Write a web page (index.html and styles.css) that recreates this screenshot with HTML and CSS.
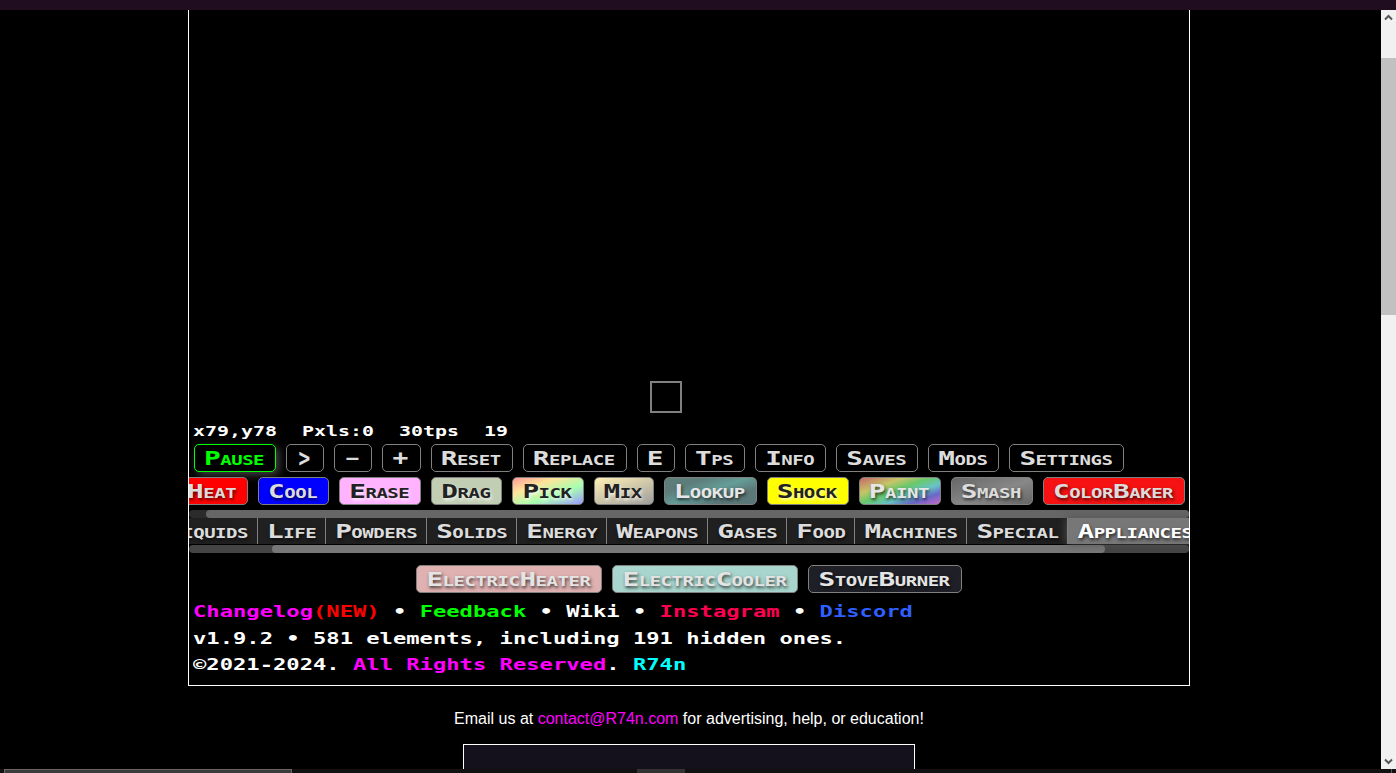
FILE: index.html
```
<!DOCTYPE html>
<html>
<head>
    <meta charset="utf-8">
    <title>Sandboxels</title>
    <link rel="stylesheet" href="styles.css">
</head>
<body>
    <div class="topStrip"></div>
    <div class="window">
        <div class="page">
            <div class="gameDiv">
                <div class="canvasArea">
                    <div class="cursorBox"></div>
                </div>
                <div class="stats">
                    <span>x79,y78</span><span>Pxls:0</span><span>30tps</span><span>19</span>
                </div>
                <div class="toolControls">
                    <button class="controlButton on"><span>Pause</span></button>
                    <button class="controlButton step"><span>&gt;</span></button>
                    <button class="controlButton minus"><span>-</span></button>
                    <button class="controlButton plus"><span>+</span></button>
                    <button class="controlButton"><span>Reset</span></button>
                    <button class="controlButton"><span>Replace</span></button>
                    <button class="controlButton"><span>E</span></button>
                    <button class="controlButton"><span>Tps</span></button>
                    <button class="controlButton"><span>Info</span></button>
                    <button class="controlButton"><span>Saves</span></button>
                    <button class="controlButton"><span>Mods</span></button>
                    <button class="controlButton"><span>Settings</span></button>
                </div>
                <div class="category tools">
                    <button class="elementButton heat"><span>Heat</span></button>
                    <button class="elementButton cool"><span>Cool</span></button>
                    <button class="elementButton bright erase"><span>Erase</span></button>
                    <button class="elementButton bright drag"><span>Drag</span></button>
                    <button class="elementButton bright pick"><span>Pick</span></button>
                    <button class="elementButton bright mix"><span>Mix</span></button>
                    <button class="elementButton lookup"><span>Lookup</span></button>
                    <button class="elementButton bright shock"><span>Shock</span></button>
                    <button class="elementButton paint"><span>Paint</span></button>
                    <button class="elementButton smash"><span>Smash</span></button>
                    <button class="elementButton colorBaker"><span>ColorBaker</span></button>
                </div>
                <div class="scrollTrack toolScroll"><div class="scrollThumb"></div></div>
                <div class="categoryControls">
                    <button class="categoryButton"><span>Liquids</span></button>
                    <button class="categoryButton"><span>Life</span></button>
                    <button class="categoryButton"><span>Powders</span></button>
                    <button class="categoryButton"><span>Solids</span></button>
                    <button class="categoryButton"><span>Energy</span></button>
                    <button class="categoryButton"><span>Weapons</span></button>
                    <button class="categoryButton"><span>Gases</span></button>
                    <button class="categoryButton"><span>Food</span></button>
                    <button class="categoryButton"><span>Machines</span></button>
                    <button class="categoryButton"><span>Special</span></button>
                    <button class="categoryButton current"><span>Appliances</span></button>
                </div>
                <div class="scrollTrack categoryScroll"><div class="scrollThumb"></div></div>
                <div class="category elements">
                    <button class="elementButton heater"><span>ElectricHeater</span></button>
                    <button class="elementButton cooler"><span>ElectricCooler</span></button>
                    <button class="elementButton burner"><span>StoveBurner</span></button>
                </div>
                <div class="info">
                    <p><a class="magenta">Changelog</a><a class="red">(NEW)</a> • <a class="green">Feedback</a> • <a>Wiki</a> • <a class="insta">Instagram</a> • <a class="discord">Discord</a></p>
                    <p>v1.9.2 • 581 elements, including 191 hidden ones.</p>
                    <p>©2021-2024. <a class="magenta">All Rights Reserved</a>. <a class="cyan">R74n</a></p>
                </div>
            </div>
            <p class="email">Email us at <a class="magenta">contact@R74n.com</a> for advertising, help, or education!</p>
            <div class="aboutBox"></div>
        </div>
        <div class="pageScroll">
            <svg width="15" height="17" viewBox="0 0 15 17"><path d="M4 9.5 L7.5 6 L11 9.5" /></svg>
            <div class="pageThumb"></div>
            <svg class="down" width="15" height="17" viewBox="0 0 15 17"><path d="M4 7.5 L7.5 11 L11 7.5" /></svg>
        </div>
    </div>
    <div class="taskbar">
        <div class="search"></div>
        <div class="activeTask"></div>
        <div class="showDesktop"></div>
    </div>
</body>
</html>
```
FILE: styles.css
```
* {
    box-sizing: border-box;
}
body {
    margin: 0;
    height: 773px;
    overflow: hidden;
    background-color: #000;
    color: #fff;
    display: flex;
    flex-direction: column;
    font-family: "Liberation Sans", Arial, sans-serif;
}
p {
    margin: 0;
}
.topStrip {
    height: 10px;
    background-color: #200d20;
}
.window {
    display: flex;
    height: 759px;
    overflow: hidden;
}
.page {
    width: 1381px;
    padding-left: 188px;
}
.gameDiv {
    width: 1002px;
    height: 676px;
    border: 1px solid #fff;
    border-top: none;
    overflow: hidden;
}
.canvasArea {
    height: 410px;
    padding: 371px 0 0 461px;
}
.cursorBox {
    width: 32px;
    height: 32px;
    border: 2px solid #808080;
}

/* wide pixel lettering: large type flattened vertically */
.stats, .info, button {
    font-family: "DejaVu Sans Mono", monospace;
    font-weight: bold;
    white-space: nowrap;
}
.stats {
    display: flex;
    gap: 25px;
    height: 24px;
    padding-left: 4px;
    font-size: 19.93px;
    line-height: 23px;
    transform: scaleY(0.68);
}
button {
    flex: none;
    padding: 0 10px;
    margin: 0;
    color: #dcdcdc;
    font-size: 27.69px;
    letter-spacing: -0.47px;
    font-variant: small-caps;
    line-height: 26px;
    text-shadow: 1px 2px 4px rgba(0, 0, 0, 0.7);
}
button span {
    display: block;
    height: 26px;
    margin: 0 1px 0 -1px;
    transform: translateY(0.7px) scaleY(0.71);
}
.step span {
    transform: scale(0.7, 0.95);
}
.minus span {
    transform: scale(1.4, 0.6);
}
.plus span {
    transform: scale(0.95, 0.75);
}
.toolControls, .category {
    display: flex;
    gap: 10px;
    height: 28px;
}
.toolControls {
    padding-left: 5px;
}
.controlButton, .elementButton {
    height: 28px;
    border: 1px solid #808080;
    border-radius: 5px;
    background-color: #000;
}
.controlButton.on {
    color: #0f0;
    border-color: #0f0;
    box-shadow: 3px 3px 8px #444;
}
.tools {
    margin: 5px 0 5px -12px;
}
.bright {
    color: #222;
    text-shadow: 1px 2px 4px rgba(255, 255, 255, 0.8);
}
.heat { background-color: #f00; }
.cool { background-color: #00f; }
.erase { background-color: #ffb3ff; }
.drag { background-color: #c2ceb4; }
.pick { background: linear-gradient(160deg, #ff9a9a, #ffe49a 30%, #a8ffae 62%, #9a9aff); }
.mix { background: linear-gradient(160deg, #fff0b5, #9e9e9e); }
.lookup { background: linear-gradient(160deg, #5d7d7a 25%, #659d98 50%, #5b7777 75%); }
.shock { background-color: #ff0; }
.paint { background: linear-gradient(160deg, #c96868, #c6c568 28%, #68c86b 46%, #68c4c8 64%, #6868c8 80%, #c868c8); }
.smash { background: linear-gradient(160deg, #666, #888 55%, #666); }
.colorBaker { background-color: #f61212; }
.heater { background-color: #dfb1b1; }
.cooler { background-color: #a8d5cd; }
.burner { background-color: #1f2027; }
.lookup, .paint {
    color: #e6e6e6;
}

.scrollTrack {
    height: 8px;
    border-radius: 4px;
    background-color: #2b2b2b;
}
.scrollThumb {
    height: 8px;
    border-radius: 4px;
    background-color: #666;
}
.toolScroll {
    padding-left: 17px;
}
.categoryScroll {
    padding: 0 84px 0 83px;
    background-color: #444;
}
.categoryScroll .scrollThumb {
    background-color: #777;
}
.categoryControls {
    display: flex;
    height: 27px;
    margin-left: -33px;
    padding-bottom: 1px;
}
.categoryButton {
    height: 26px;
    padding: 0 9px;
    border: none;
    border-left: 1px solid #808080;
    background-color: #202020;
}
.categoryButton span {
    margin: 0;
}
.categoryButton.current {
    color: #fff;
    background-color: #777;
    box-shadow: 0 0 10px #555;
}
.elements {
    justify-content: center;
    margin: 12px 0 5px;
}
.elements .elementButton {
    color: #e4e4e4;
}
.info {
    padding-left: 4px;
    font-size: 22.15px;
}
.info p {
    height: 26.6px;
    line-height: 26.6px;
    transform: scaleY(0.68);
}
.magenta { color: #f0f; }
.red { color: #f00; }
.green { color: #0f0; }
.insta { color: #ff0050; }
.discord { color: #2f5fff; }
.cyan { color: #0ff; }

.email {
    width: 1002px;
    margin-top: 22px;
    font-size: 16px;
    line-height: 21px;
    text-align: center;
}
.aboutBox {
    width: 452px;
    height: 60px;
    margin: 15px 0 0 275px;
    border: 1px solid #fff;
    background-color: #15111c;
}

.pageScroll {
    display: flex;
    flex-direction: column;
    width: 15px;
    background-color: #f1f1f1;
}
.pageScroll svg {
    flex: none;
    fill: none;
    stroke: #555;
    stroke-width: 2;
}
.pageThumb {
    height: 257px;
    margin-top: 31px;
    background-color: #c1c1c1;
}
.pageScroll .down {
    margin-top: auto;
}
.taskbar {
    display: flex;
    height: 4px;
    padding-left: 4px;
    background-color: #111;
}
.search {
    width: 288px;
    border: 1px solid #666;
    border-bottom: none;
    background-color: #3b3b3b;
}
.activeTask {
    width: 48px;
    margin-left: 345px;
    background-color: #333;
}
.showDesktop {
    width: 1px;
    margin: 0 4px 0 auto;
    background-color: #555;
}
```
